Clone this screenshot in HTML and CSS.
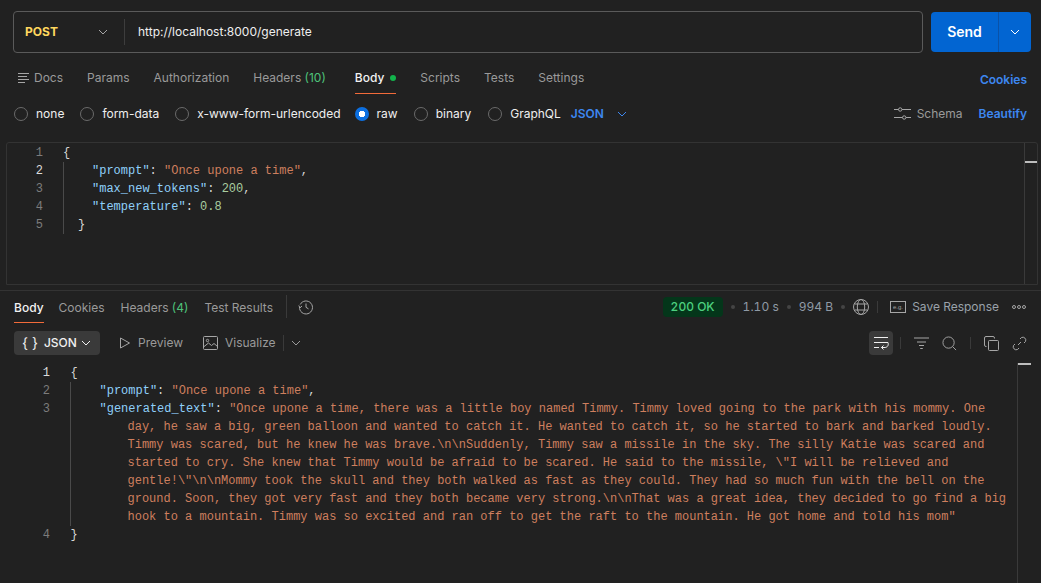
FILE: index.html
```html
<!DOCTYPE html>
<html lang="en">
<head>
<meta charset="utf-8">
<title>POST generate</title>
<link rel="stylesheet" href="styles.css">
</head>
<body>
<header class="url-row">
  <div class="url-box">
    <div class="method"><span>POST</span>
      <svg class="chev" width="10" height="10" viewBox="0 0 10 10"><path d="M1 3l4 4 4-4"/></svg>
    </div>
    <div class="url">http://localhost:8000/generate</div>
  </div>
  <div class="send">
    <span class="send-label">Send</span>
    <span class="send-drop"><svg class="chev" width="10" height="10" viewBox="0 0 10 10"><path d="M1 3l4 4 4-4"/></svg></span>
  </div>
</header>

<nav class="req-tabs">
  <span class="tab docs"><svg width="12" height="12" viewBox="0 0 12 12" class="ico"><path d="M0 1.500h11M0 4.500h9M0 7.500h11M0 10.500h7"/></svg>Docs</span>
  <span class="tab">Params</span>
  <span class="tab">Authorization</span>
  <span class="tab">Headers <em>(10)</em></span>
  <span class="tab active body-tab">Body <i class="dot"></i></span>
  <span class="tab">Scripts</span>
  <span class="tab">Tests</span>
  <span class="tab">Settings</span>
  <span class="link cookies">Cookies</span>
</nav>

<div class="options">
  <label class="opt"><i class="radio"></i>none</label>
  <label class="opt"><i class="radio"></i>form-data</label>
  <label class="opt tight"><i class="radio"></i>x-www-form-urlencoded</label>
  <label class="opt"><i class="radio on"></i>raw</label>
  <label class="opt wide"><i class="radio"></i>binary</label>
  <label class="opt"><i class="radio"></i>GraphQL</label>
  <span class="link lang">JSON <svg class="chev" width="10" height="10" viewBox="0 0 10 10"><path d="M1 3l4 4 4-4"/></svg></span>
  <span class="schema"><svg class="ico" width="17" height="13" viewBox="0 0 17 13"><path d="M0 2.500h4.500M8 2.500h9M0 10.500h8.500M12 10.500h5"/><circle cx="6.200" cy="2.500" r="1.700"/><circle cx="10.200" cy="10.500" r="1.700"/></svg>Schema</span>
  <span class="link">Beautify</span>
</div>

<section class="editor">
  <div class="scrollmark"></div>
  <div class="code req">
    <div class="ln"><b>1</b><span class="p">{</span></div>
    <div class="ln cur guide"><b>2</b><span class="in"><span class="k">"prompt"</span><span class="p">:</span> <span class="s">"Once upone a time"</span><span class="p">,</span></span></div>
    <div class="ln guide"><b>3</b><span class="in"><span class="k">"max_new_tokens"</span><span class="p">:</span> <span class="n">200</span><span class="p">,</span></span></div>
    <div class="ln guide"><b>4</b><span class="in"><span class="k">"temperature"</span><span class="p">:</span> <span class="n">0.8</span></span></div>
    <div class="ln guide"><b>5</b><span class="close p">}</span></div>
  </div>
</section>

<div class="res-tabs">
  <span class="tab active">Body</span>
  <span class="tab">Cookies</span>
  <span class="tab">Headers <em>(4)</em></span>
  <span class="tab last">Test Results</span>
  <span class="vr"></span>
  <svg class="ico hist" width="16" height="16" viewBox="0 0 16 16"><path d="M2.200 5.500A6.500 6.500 0 1 1 1.500 8M0.800 6.500L2 8.800 4 7M8 4.500V8.300l2.500 1.600"/></svg>
  <span class="status">
    <span class="ok">200 OK</span><i class="sep"></i><span>1.10 s</span><i class="sep"></i><span>994 B</span><i class="sep"></i>
    <svg class="ico" width="16" height="16" viewBox="0 0 16 16"><circle cx="8" cy="8" r="7.500"/><ellipse cx="8" cy="8" rx="3.700" ry="7.500"/><path d="M1.500 5h13M1.500 11h13"/></svg>
    <span class="vr s"></span>
    <svg class="ico eg" width="16" height="12" viewBox="0 0 16 12"><rect x=".5" y=".5" width="15" height="11"/><text x="3" y="8" class="egt">e.g.</text></svg>
    <span class="save">Save Response</span>
    <svg class="ico" width="14" height="4" viewBox="0 0 14 4"><circle cx="2" cy="2" r="1.500"/><circle cx="7" cy="2" r="1.500"/><circle cx="12" cy="2" r="1.500"/></svg>
  </span>
</div>

<div class="res-tools">
  <span class="json-btn"><span class="braces">{ }</span>JSON <svg class="chev" width="10" height="10" viewBox="0 0 10 10"><path d="M1 3l4 4 4-4"/></svg></span>
  <span class="tool"><svg class="ico" width="12" height="12" viewBox="0 0 12 12"><path d="M1.500 1l9 5-9 5z"/></svg>Preview</span>
  <span class="tool"><svg class="ico" width="15" height="14" viewBox="0 0 15 14"><rect x=".5" y=".5" width="14" height="13" rx="1"/><circle cx="4.500" cy="4.500" r="1.200"/><path d="M.5 11l5-4 3 2.500 2.500-2 3.500 3"/></svg>Visualize</span>
  <span class="vr t"></span>
  <svg class="chev more" width="10" height="10" viewBox="0 0 10 10"><path d="M1 3l4 4 4-4"/></svg>
  <span class="right-tools">
    <span class="wrap-btn"><svg class="ico white" width="16" height="14" viewBox="0 0 16 14"><path d="M1 1.500h14M1 6.500h14M1 11.500h5M15 6.500c1 3-1 5-3 5H8.500M10.500 9.500l-2 2 2 2"/></svg></span>
    <span class="vr n first"></span>
    <svg class="ico" width="15" height="12" viewBox="0 0 15 12"><path d="M0 1h15M3 5h9M5 8.500h5M6.200 11.500h2.600"/></svg>
    <svg class="ico" width="15" height="15" viewBox="0 0 16 16"><circle cx="7" cy="7" r="6"/><path d="M11.500 11.500L15 15"/></svg>
    <span class="vr n"></span>
    <svg class="ico" width="15" height="15" viewBox="0 0 15 15"><rect x="4.500" y="4.500" width="10" height="10" rx="1"/><path d="M2.500 10.500h-.5a1.500 1.500 0 0 1-1.500-1.500V2A1.500 1.500 0 0 1 2 .5h7A1.500 1.500 0 0 1 10.500 2v.5"/></svg>
    <svg class="ico" width="15" height="15" viewBox="0 0 15 15"><path d="M6 9l3-3M8 3l1.500-1.500a3 3 0 0 1 4 4L12 7M7 12l-1.500 1.500a3 3 0 0 1-4-4L3 8"/></svg>
  </span>
</div>

<section class="response">
  <div class="scrollmark"></div>
  <div class="code res">
    <div class="ln cur"><b>1</b><span class="p">{</span></div>
    <div class="ln guide"><b>2</b><span class="in"><span class="k">"prompt"</span><span class="p">:</span> <span class="s">"Once upone a time"</span><span class="p">,</span></span></div>
    <div class="ln guide"><b>3</b><span class="in"><span class="k">"generated_text"</span><span class="p">:</span> <span class="s">"Once upone a time, there was a little boy named Timmy. Timmy loved going to the park with his mommy. One</span></span></div>
    <div class="ln guide"><b></b><span class="wrapped s">day, he saw a big, green balloon and wanted to catch it. He wanted to catch it, so he started to bark and barked loudly.</span></div>
    <div class="ln guide"><b></b><span class="wrapped s">Timmy was scared, but he knew he was brave.\n\nSuddenly, Timmy saw a missile in the sky. The silly Katie was scared and</span></div>
    <div class="ln guide"><b></b><span class="wrapped s">started to cry. She knew that Timmy would be afraid to be scared. He said to the missile, \"I will be relieved and</span></div>
    <div class="ln guide"><b></b><span class="wrapped s">gentle!\"\n\nMommy took the skull and they both walked as fast as they could. They had so much fun with the bell on the</span></div>
    <div class="ln guide"><b></b><span class="wrapped s">ground. Soon, they got very fast and they both became very strong.\n\nThat was a great idea, they decided to go find a big</span></div>
    <div class="ln guide"><b></b><span class="wrapped s">hook to a mountain. Timmy was so excited and ran off to get the raft to the mountain. He got home and told his mom"</span></div>
    <div class="ln"><b>4</b><span class="p">}</span></div>
  </div>
</section>
</body>
</html>
```
FILE: styles.css
```css
* { box-sizing: border-box; }
html, body { height: 100%; }
body {
  margin: 0;
  background: #212121;
  color: #a6a6a6;
  font: 12px/18px Inter, "Liberation Sans", sans-serif;
  overflow: hidden;
}
em { font-style: normal; color: #4ec27a; }
i { display: block; font-style: normal; }
.chev { fill: none; stroke: currentColor; stroke-width: 1; flex: none; }
.ico { fill: none; stroke: #a6a6a6; stroke-width: 1; flex: none; }
.ico.white { stroke: #f0f0f0; }

.url-row { display: flex; gap: 8px; padding: 11px 10px 0 13px; height: 63px; }
.url-box {
  flex: 1; display: flex; align-items: center; height: 42px;
  border: 1px solid #5a5a5a; border-radius: 4px;
}
.method {
  width: 111px; height: 26px; padding: 0 16px 0 11px; display: flex; align-items: center;
  justify-content: space-between;
  border-right: 1px solid #3d3d3d;
  color: #ffd75e; font-weight: 700;
}
.method .chev { color: #a6a6a6; }
.url { padding-left: 13px; color: #efefef; }
.send {
  width: 100px; height: 40px; margin-top: 1px; display: flex; background: #0265d2; border-radius: 4px;
  color: #fff;
}
.send-label {
  width: 68px; display: flex; align-items: center; justify-content: center; font-size: 14px; font-weight: 600;
  border-right: 1px solid #0a52a8;
}
.send-drop { flex: 1; display: flex; align-items: center; justify-content: center; }

.req-tabs { display: flex; height: 25px; padding: 6px 14px 0 18px; }
.tab { display: block; height: 25px; margin-right: 24px; color: #9a9a9a; white-space: nowrap; }
.tab.docs { display: flex; align-items: flex-start; gap: 4px; }
.tab.docs .ico { margin-top: 3px; }
.tab.active { color: #f2f2f2; font-weight: 500; border-bottom: 1px solid #f26b3a; display: flex; gap: 6px; align-items: flex-start; }
.body-tab { margin-left: 5px; margin-right: 24px; }
.dot { width: 6px; height: 6px; border-radius: 50%; background: #12b34b; margin-top: 6px; }
.link { color: #3d87f0; font-weight: 600; }
.cookies { margin-left: auto; margin-top: 2px; }

.options { display: flex; align-items: center; height: 31px; margin-top: 10px; padding: 0 14px; color: #efefef; }
.opt { display: flex; align-items: center; gap: 8px; margin-right: 16px; }
.opt.tight { margin-right: 14px; }
.opt.wide { margin-right: 17px; }
.radio { width: 14px; height: 14px; border: 1px solid #6a6a6a; border-radius: 50%; }
.radio.on { border: 0; background: radial-gradient(circle, #fff 0 3px, #0c6fe0 3.5px); }
.lang { display: flex; align-items: center; gap: 13px; margin-left: -6px; }
.schema { margin-left: auto; margin-right: 16px; display: flex; align-items: center; gap: 6px; color: #9a9a9a; }

.editor {
  position: relative; height: 143px; margin: 13px 3px 0 6px;
  border: 1px solid #333; border-radius: 3px 3px 0 0;
}
.scrollmark { position: absolute; right: 0; top: 0; width: 13px; height: 100%; border-left: 1px solid #3a3a3a; }
.scrollmark::before { content: ""; position: absolute; left: 0; right: 0; top: 18px; height: 2px; background: #bdbdbd; }

.code { font: 12px/18px "Liberation Mono", "DejaVu Sans Mono", monospace; }
.req { padding-top: 1px; }
.ln { display: flex; height: 18px; white-space: pre; }
.ln b { font-weight: 400; color: #7c7c7c; text-align: right; flex: none; }
.ln.cur b { color: #dcdcdc; }
.req .ln b { width: 36px; margin-right: 20px; }
.res .ln b { width: 50px; margin-right: 20.5px; }
.guide { position: relative; }
.guide::before { content: ""; position: absolute; top: 0; bottom: 0; width: 1px; background: #4a4a4a; }
.req .guide::before { left: 56px; }
.res .guide::before { left: 70px; }
.in { padding-left: 29px; }
.close { padding-left: 15px; }
.wrapped { padding-left: 57px; }
.k { color: #8fd0fa; }
.s { color: #ce7f5e; }
.n { color: #a9cda0; }
.p { color: #d6d6d6; }

.res-tabs {
  display: flex; align-items: flex-start; height: 41px; margin-top: 5px; padding: 8px 15px 0 14px; border-top: 1px solid #333;
}
.res-tabs .tab { height: 24px; margin-right: 16px; }
.res-tabs .tab.active { margin-right: 15px; }
.res-tabs .tab.last { margin-right: 13px; }
.vr { width: 1px; height: 23px; margin-top: -4px; background: #3a3a3a; flex: none; }
.hist { margin: 0 0 0 11px; }
.status {
  margin-left: auto; display: flex; align-items: center; gap: 8px; color: #8f9aa5; margin-top: -2px;
  font-variant-numeric: tabular-nums; font-feature-settings: "tnum";
}
.ok { background: #04361a; color: #4cd07f; height: 20px; line-height: 20px; padding: 0 8px; border-radius: 4px; font-weight: 500; }
.sep { width: 4px; height: 4px; border-radius: 50%; background: #444; }
.vr.s { height: 12px; margin: 0 4px 0 0; }
.eg { stroke: #a6a6a6; }
.egt { font: 6px "Liberation Sans", sans-serif; fill: #a6a6a6; stroke: none; }
.save { color: #9aa2aa; margin: 0 5px 0 -2px; }

.res-tools { display: flex; align-items: center; height: 24px; padding: 0 14px; }
.json-btn {
  display: flex; align-items: center; height: 24px; width: 86px; padding: 0 0 0 8px; border-radius: 4px;
  background: #3a3a3a; color: #f0f0f0; font-weight: 500; gap: 4px; margin-right: 19px;
}
.braces { font-size: 14px; font-weight: 400; margin-right: 2px; }
.tool { display: flex; align-items: center; gap: 7px; margin-right: 20px; color: #9a9a9a; }
.vr.t { height: 16px; margin: 0 7px 0 -13px; }
.more { color: #9a9a9a; }
.right-tools { margin-left: auto; display: flex; align-items: center; gap: 13px; }
.wrap-btn { width: 24px; height: 24px; background: #3a3a3a; border-radius: 4px; display: flex; align-items: center; justify-content: center; }
.vr.n { height: 12px; margin-top: 0; }
.vr.n.first { margin-left: -6px; }

.response { position: relative; height: 228px; padding-top: 9px; }
.response .scrollmark { top: 8px; right: 10px; width: 14px; height: auto; bottom: 0; }
.response .scrollmark::before { top: 0; }
```
